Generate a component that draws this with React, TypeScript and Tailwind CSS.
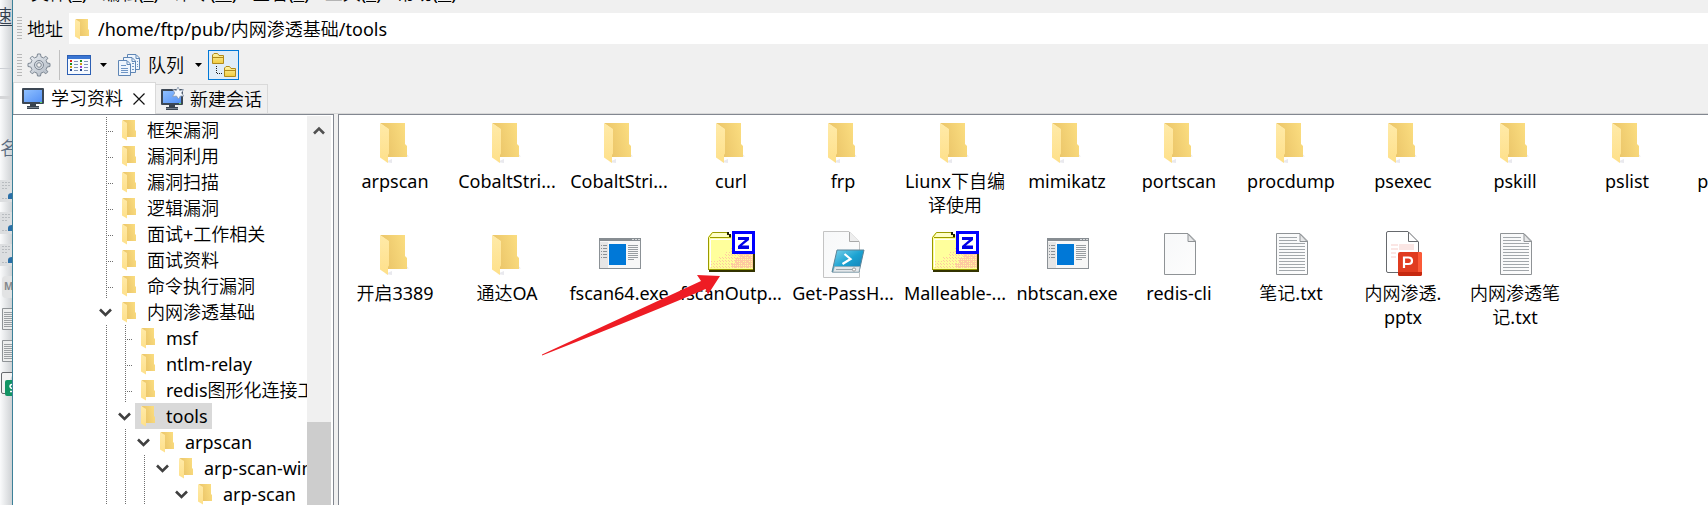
import React, { useState } from "react";

type Kind = "folder" | "exe" | "zip" | "ps" | "blank" | "txt" | "ppt";
type Entry = { kind: Kind; lines: string[] };

const rowOne: Entry[] = [
  { kind: "folder", lines: ["arpscan"] },
  { kind: "folder", lines: ["CobaltStri..."] },
  { kind: "folder", lines: ["CobaltStri..."] },
  { kind: "folder", lines: ["curl"] },
  { kind: "folder", lines: ["frp"] },
  { kind: "folder", lines: ["Liunx下自编", "译使用"] },
  { kind: "folder", lines: ["mimikatz"] },
  { kind: "folder", lines: ["portscan"] },
  { kind: "folder", lines: ["procdump"] },
  { kind: "folder", lines: ["psexec"] },
  { kind: "folder", lines: ["pskill"] },
  { kind: "folder", lines: ["pslist"] },
  { kind: "folder", lines: ["pspasswd"] },
];

const rowTwo: Entry[] = [
  { kind: "folder", lines: ["开启3389"] },
  { kind: "folder", lines: ["通达OA"] },
  { kind: "exe", lines: ["fscan64.exe"] },
  { kind: "zip", lines: ["fscanOutp..."] },
  { kind: "ps", lines: ["Get-PassH..."] },
  { kind: "zip", lines: ["Malleable-..."] },
  { kind: "exe", lines: ["nbtscan.exe"] },
  { kind: "blank", lines: ["redis-cli"] },
  { kind: "txt", lines: ["笔记.txt"] },
  { kind: "ppt", lines: ["内网渗透.", "pptx"] },
  { kind: "txt", lines: ["内网渗透笔", "记.txt"] },
];

type Guide = "none" | "line" | "branch" | "open";
type Node = { name: string; guides: Guide[]; selected?: boolean };

const tree: Node[] = [
  { name: "框架漏洞", guides: ["branch"] },
  { name: "漏洞利用", guides: ["branch"] },
  { name: "漏洞扫描", guides: ["branch"] },
  { name: "逻辑漏洞", guides: ["branch"] },
  { name: "面试+工作相关", guides: ["branch"] },
  { name: "面试资料", guides: ["branch"] },
  { name: "命令执行漏洞", guides: ["branch"] },
  { name: "内网渗透基础", guides: ["open"] },
  { name: "msf", guides: ["line", "branch"] },
  { name: "ntlm-relay", guides: ["line", "branch"] },
  { name: "redis图形化连接工具", guides: ["line", "branch"] },
  { name: "tools", guides: ["line", "open"], selected: true },
  { name: "arpscan", guides: ["line", "line", "open"] },
  { name: "arp-scan-windows", guides: ["line", "line", "line", "open"] },
  { name: "arp-scan", guides: ["line", "line", "line", "none", "open"] },
];

function Gradients() {
  return (
    <svg className="absolute size-0" aria-hidden="true">
      <defs>
        <linearGradient id="folderBack" x1="0" y1="0.3" x2="1" y2="0">
          <stop offset="0" stopColor="#eac468" />
          <stop offset="1" stopColor="#fcdf82" />
        </linearGradient>
        <linearGradient id="folderFront" x1="0" y1="0" x2="0" y2="1">
          <stop offset="0" stopColor="#ffeaa8" />
          <stop offset="1" stopColor="#fee08a" />
        </linearGradient>
        <linearGradient id="paper" x1="0" y1="0" x2="1" y2="1">
          <stop offset="0" stopColor="#f7f8f9" />
          <stop offset="1" stopColor="#fdfdfd" />
        </linearGradient>
        <linearGradient id="screen" x1="0" y1="0" x2="1" y2="1">
          <stop offset="0" stopColor="#8fc0ff" />
          <stop offset="1" stopColor="#5591f5" />
        </linearGradient>
        <linearGradient id="shell" x1="0" y1="0" x2="1" y2="1">
          <stop offset="0" stopColor="#7fd3ec" />
          <stop offset="0.5" stopColor="#1ba2d1" />
          <stop offset="1" stopColor="#1679b0" />
        </linearGradient>
        <linearGradient id="gear" x1="0" y1="0" x2="1" y2="1">
          <stop offset="0" stopColor="#eef1f5" />
          <stop offset="1" stopColor="#aeb7c2" />
        </linearGradient>
        <linearGradient id="tinyFolder" x1="0" y1="0" x2="0" y2="1">
          <stop offset="0" stopColor="#fff6a8" />
          <stop offset="1" stopColor="#f0cb3e" />
        </linearGradient>
        <pattern id="dither" width="3" height="3" patternUnits="userSpaceOnUse">
          <rect width="1" height="1" fill="#ffc9a0" />
          <rect x="1" y="1" width="1" height="1" fill="#ffc9a0" />
        </pattern>
        <pattern id="ditherDense" width="2" height="2" patternUnits="userSpaceOnUse">
          <rect width="2" height="1" fill="#ffc9a0" />
          <rect x="1" y="1" width="1" height="1" fill="#ffc9a0" />
        </pattern>
      </defs>
    </svg>
  );
}

function SmallFolder() {
  return (
    <svg width="15" height="22" viewBox="0 0 15 22" className="shrink-0" aria-hidden="true">
      <path d="M1 1H13V11L14 12V18H4Z" fill="url(#folderBack)" />
      <path d="M0 1L5 4V21.500L0 18.500Z" fill="url(#folderFront)" />
    </svg>
  );
}

function FolderIcon() {
  return (
    <>
      <path d="M30 37.500h8l-2-2h-6zM14 43l7 1 0-4z" fill="#e9e9ee" />
      <path d="M9 4H34V25L36 27V38H17V10Z" fill="url(#folderBack)" />
      <path d="M9 4L18 10V34.500L17 36V44L9 38.500Z" fill="url(#folderFront)" />
    </>
  );
}

function ExeIcon() {
  return (
    <>
      <rect x="4.500" y="7.500" width="41" height="30" fill="#f7f7f7" stroke="#8b9196" />
      <rect x="4" y="7" width="42" height="3" fill="#878d92" />
      <path d="M37 8h2v1h-2zM40 8h2v1h-2zM43 8h2v1h-2z" fill="#d5d8da" />
      <rect x="5" y="11" width="8" height="26" fill="#e6e6e6" />
      <rect x="14" y="13" width="17" height="21" fill="#0078d7" />
      <path d="M6 14.500h1m1 0h4M6 17.500h1m1 0h4M6 20.500h1m1 0h4M6 23.500h1m1 0h4M6 26.500h1m1 0h4" stroke="#8b9196" />
      <path d="M33 14.500h10M33 16.500h10M33 18.500h10M33 20.500h10M33 22.500h10M33 24.500h10M33 26.500h10M33 28.500h6" stroke="#989da1" />
    </>
  );
}

function ZipIcon() {
  return (
    <g transform="translate(0 -1)">
      <path d="M1 7L5 2H19L23 5H46V39H1Z" fill="#ffff9c" />
      <path d="M4 7L6 2H18L21 7Z" fill="#ffffc8" />
      <path d="M18 22h6v-4h8v-4h14v24H4v-7h8v-5h6z" fill="url(#dither)" />
      <path d="M28 28h4v-5h14v15H24v-5h4z" fill="url(#ditherDense)" />
      <path d="M1.500 39V7.500L5.500 2.500H20M3 7.500H24" stroke="#9a9a00" fill="none" />
      <path d="M3.500 37V9.500H24" stroke="#ffffff" fill="none" />
      <path d="M20 2h2v2h2v3h-2V5h-2z" fill="#202000" />
      <path d="M2 39H46V22H48V42H2Z" fill="#333300" />
      <rect x="1" y="39" width="45" height="1" fill="#9a9a00" />
      <rect x="26.500" y="2.500" width="20" height="20" fill="#fff" stroke="#0000ff" strokeWidth="3" />
      <path d="M31 7H42V10L35 15.500H42V19H31V16L38 10H31Z" fill="#0000e8" />
    </g>
  );
}

function PowerShellIcon() {
  return (
    <>
      <path d="M4.500 .500H30L40.500 11V46.500H4.500Z" fill="url(#paper)" stroke="#c4c4c4" />
      <path d="M30.500 1V10.500H40" fill="#eee" stroke="#a9a9a9" />
      <path d="M18 19H45L40 41H13Z" fill="url(#shell)" stroke="#5d8498" />
      <path d="M15.500 35.500H41L40 41H14Z" fill="#e3e7ea" stroke="#8fa2ad" strokeWidth=".6" />
      <path d="M25.500 23l6 5-8 5" stroke="#fff" strokeWidth="2.200" fill="none" />
      <path d="M17 38.500h18" stroke="#9ba5ab" />
      <circle cx="35" cy="38.500" r="1.600" fill="#fff" stroke="#888" strokeWidth=".8" />
    </>
  );
}

function PageIcon({ lined }: { lined: boolean }) {
  return (
    <>
      <path d="M9.500 2.500H33L40.500 10V43.500H9.500Z" fill="url(#paper)" stroke="#8f9396" />
      <path d="M33 3V10.500H40Z" fill="#e6e7e8" stroke="#8f9396" />
      {lined && (
        <path
          d="M12 6.500h18M12 9.500h18M12 12.500h26M12 15.500h26M12 18.500h26M12 21.500h26M12 24.500h26M12 27.500h26M12 30.500h26M12 33.500h26M12 36.500h26M12 39.500h26"
          stroke="#a2a7ab"
        />
      )}
    </>
  );
}

function SlidesIcon() {
  return (
    <g transform="translate(1 0)">
      <path d="M8 .500H28L38.500 11V41.500H8Q6.500 41.500 6.500 40V2Q6.500 .500 8 .500Z" fill="#fff" stroke="#66696d" />
      <path d="M28.500 1V10.500H38" fill="none" stroke="#66696d" />
      <path d="M11 13h7v2h-7zM11 17h7v2h-7zM11 21h5v2h-5zM11 25h5v2h-5zM19 13h15v6h-15z" fill="#fbe6e4" />
      <rect x="18" y="21" width="24" height="24" rx="2" fill="#e03c20" />
      <path d="M38 21h2q2 0 2 2v18h-4z" fill="#fb5a38" />
      <path d="M18 41h24v2q0 2-2 2h-20q-2 0-2-2z" fill="#c6280f" />
      <path d="M24 37V26.500H28.500Q32 26.500 32 29.700Q32 33 28.500 33H24" fill="none" stroke="#fff" strokeWidth="2.200" />
    </g>
  );
}

function FileIcon({ kind }: { kind: Kind }) {
  return (
    <svg width="48" height="48" viewBox="0 0 48 48" aria-hidden="true">
      {kind === "folder" && <FolderIcon />}
      {kind === "exe" && <ExeIcon />}
      {kind === "zip" && <ZipIcon />}
      {kind === "ps" && <PowerShellIcon />}
      {kind === "blank" && <PageIcon lined={false} />}
      {kind === "txt" && <PageIcon lined />}
      {kind === "ppt" && <SlidesIcon />}
    </svg>
  );
}

function FileTile({ entry }: { entry: Entry }) {
  return (
    <button type="button" className="flex h-28 flex-col items-center whitespace-nowrap">
      <FileIcon kind={entry.kind} />
      <span className="mt-0.5 flex flex-col leading-6">
        {entry.lines.map((line) => (
          <span key={line}>{line}</span>
        ))}
      </span>
    </button>
  );
}

function Monitor({ star = false }: { star?: boolean }) {
  return (
    <svg width="24" height="24" viewBox="0 0 24 24" className="shrink-0" aria-hidden="true">
      <rect x="1" y="2" width="22" height="16" rx="1" fill="#3c4754" />
      <rect x="3" y="4" width="18" height="12" fill="url(#screen)" />
      <path d="M9 18h6v2h3v3H6v-3h3z" fill="#39434f" />
      <path d="M6 21.500h12" stroke="#77818c" />
      <rect x="19" y="16" width="2" height="1" fill="#5fd65f" />
      {star && (
        <path
          d="M18 0l1.700 3.500L23.500 2.500L21.500 6L24 9L20.300 9L18.500 12L16.500 9L12.500 9.500L14.800 6L12.800 2.500L16.300 3.500Z"
          fill="#f5f8fc"
          stroke="#8c9bb0"
          strokeWidth=".8"
        />
      )}
    </svg>
  );
}

function Gear() {
  return (
    <svg width="24" height="24" viewBox="-12 -12 24 24" aria-hidden="true">
      <g fill="url(#gear)" stroke="#7d8793" strokeWidth="1">
        <path d="M-2 -8.200L-1.500 -11H1.500L2 -8.200L4.600 -7.100L6.800 -8.800L8.800 -6.800L7.100 -4.600L8.200 -2L11 -1.500V1.500L8.200 2L7.100 4.600L8.800 6.800L6.800 8.800L4.600 7.100L2 8.200L1.500 11H-1.500L-2 8.200L-4.600 7.100L-6.800 8.800L-8.800 6.800L-7.100 4.600L-8.200 2L-11 1.500V-1.500L-8.200 -2L-7.100 -4.600L-8.800 -6.800L-6.800 -8.800L-4.600 -7.100Z" />
        <circle r="4.500" fill="#d6dbe1" />
        <circle r="2.300" fill="#f0f0f0" />
      </g>
    </svg>
  );
}

function ListViewIcon() {
  return (
    <svg width="24" height="20" viewBox="0 0 24 20" aria-hidden="true">
      <rect x=".5" y=".5" width="23" height="19" fill="#f6faff" stroke="#2c5fb3" />
      <rect x="1" y="1" width="22" height="3" fill="#3b76d3" />
      <path d="M3 5h2v2H3z" fill="#e02020" />
      <path d="M3 8h2v2H3z" fill="#1c8a1c" />
      <path d="M3 11h2v2H3z" fill="#d09a10" />
      <path d="M3 14h2v2H3z" fill="#20408a" />
      <path d="M13 5h2v2h-2z" fill="#1c8a1c" />
      <path d="M13 8h2v2h-2z" fill="#d09a10" />
      <path d="M13 11h2v2h-2z" fill="#9a40d0" />
      <path d="M13 14h2v2h-2z" fill="#20408a" />
      <path d="M7 6.500h4M7 9.500h4M7 12.500h4M7 15.500h4M17 6.500h4M17 9.500h4M17 12.500h4M17 15.500h4" stroke="#7f93b5" />
    </svg>
  );
}

function PagesIcon() {
  return (
    <svg width="22" height="22" viewBox="0 0 22 22" aria-hidden="true">
      <g fill="#eef5fd" stroke="#5f86b5">
        <path d="M9.500 .500H18L21.500 4V15.500H9.500Z" />
        <path d="M5.500 3.500H14L17.500 7V18.500H5.500Z" />
        <path d="M.5 6.500H9L12.500 10V21.500H.5Z" />
      </g>
      <path d="M18 1v3.500h3M14 4v3.500h3M9 7v3.500h3" fill="none" stroke="#5f86b5" />
      <path d="M3 11.500h5M3 14.500h7M3 16.500h7M3 18.500h7M14 9.500h2M14 12.500h2M14 15.500h2M19 7.500h1M19 10.500h1M19 12.500h1" stroke="#6f95c4" />
    </svg>
  );
}

function FolderTreeIcon() {
  return (
    <svg width="26" height="26" viewBox="0 0 26 26" aria-hidden="true">
      <g fill="url(#tinyFolder)" stroke="#b08a1a">
        <path d="M1.500 11.500V3L3 1.500H6.500L8 3.500H12.500V11.500Z" />
        <path d="M13.500 24.500V16L15 14.500H18.500L20 16.500H24.500V24.500Z" />
      </g>
      <path d="M2 5.500h10M14 18.500h10" stroke="#b08a1a" />
      <path d="M5.500 14V21.500H12" fill="none" stroke="#222" strokeDasharray="1 1" />
    </svg>
  );
}

function Caret() {
  return (
    <svg width="7" height="4" viewBox="0 0 7 4" className="shrink-0" aria-hidden="true">
      <path d="M0 0H7L3.500 4Z" fill="#000" />
    </svg>
  );
}

function Grip() {
  return (
    <span className="h-[23px] w-[5px] shrink-0 bg-[repeating-linear-gradient(to_bottom,#b8b8b8_0_1px,transparent_1px_3px)]" />
  );
}

function GuideCell({ type }: { type: Guide }) {
  return (
    <svg width="19" height="26" viewBox="0 0 19 26" className="shrink-0" aria-hidden="true">
      {(type === "line" || type === "branch") && (
        <path d="M9.500 0V26" stroke="#6f6f6f" strokeDasharray="1 1" />
      )}
      {type === "branch" && <path d="M11 14.500H17" stroke="#6f6f6f" strokeDasharray="1 1" />}
      {type === "open" && <path d="M3 10.500L8.500 16L14 10.500" fill="none" stroke="#404040" strokeWidth="2.600" />}
    </svg>
  );
}

function TreeRow({ node }: { node: Node }) {
  return (
    <li className="flex h-[26px] items-center whitespace-nowrap">
      {node.guides.map((g, i) => (
        <GuideCell key={i} type={g} />
      ))}
      <button
        type="button"
        className={
          node.selected
            ? "flex h-[26px] items-center gap-2.5 bg-[#d9d9d9] pr-1 pl-1.5"
            : "flex h-[26px] items-center gap-2.5 pr-1 pl-1.5"
        }
      >
        <SmallFolder />
        <span className="leading-[26px]">{node.name}</span>
      </button>
    </li>
  );
}

function Photo() {
  return (
    <svg width="12" height="22" viewBox="0 0 12 22" className="mb-2.5" aria-hidden="true">
      <rect x="-6" y="0" width="18" height="22" fill="#dcdee0" />
      <path d="M2 2.500h9M2 5.500h9M2 8.500h6M2 18.500h9" stroke="#b8bcc0" strokeDasharray="2 1" />
      <path d="M8 19v-3q0-3 4-3v6z" fill="#2a6fa8" />
    </svg>
  );
}

function Note() {
  return (
    <svg width="12" height="22" viewBox="0 0 12 22" className="mb-2.5" aria-hidden="true">
      <path d="M13 .500H2.500V21.500H13" fill="#eceded" stroke="#8f9396" />
      <path d="M4 4.500h8M4 6.500h8M4 8.500h8M4 10.500h8M4 12.500h8M4 14.500h8M4 16.500h8M4 18.500h8" stroke="#9a9ea1" />
    </svg>
  );
}

function BackgroundWindow() {
  return (
    <aside className="flex w-[13px] shrink-0 flex-col overflow-hidden border-r border-[#3c8199] bg-linear-to-r from-[#fafbfc] to-[#cfd2d5] text-[#33404f]">
      <div className="flex h-[69px] flex-col border-b border-[#cdd0d5] pt-1">
        <span className="flex h-[22px] w-3 justify-end overflow-hidden border-b border-[#33404f] leading-6">速</span>
      </div>
      <div className="h-[27px]" />
      <div className="h-[3px] w-2.5 bg-[#d5d6d8]" />
      <div className="flex h-[81px] items-center pt-4 text-[#5a6b80]">名</div>
      <Photo />
      <Photo />
      <Photo />
      <div className="mb-2.5 ml-0.5 flex h-[22px] items-center rounded-l bg-[#e2e3e4] pl-0.5 text-[10px] font-bold text-[#85888c]">
        M
      </div>
      <Note />
      <Note />
      <svg width="12" height="24" viewBox="0 0 12 24" aria-hidden="true">
        <path d="M13 .500H3Q1.500 .500 1.500 2V20Q1.500 21.500 3 21.500H5" fill="#f3f3f3" stroke="#66696d" />
        <path d="M5 10q0-2 2-2h6v16H7q-2 0-2-2z" fill="#129464" />
        <path d="M12.500 12.500H12Q10 12.500 10 14.500Q10 16 12.500 16.500M10 19.500H12.500" stroke="#fff" strokeWidth="1.500" fill="none" />
      </svg>
    </aside>
  );
}

function MenuItem({ label, hot }: { label: string; hot: string }) {
  return (
    <button type="button" className="whitespace-nowrap leading-6">
      {label}(<u>{hot}</u>)
    </button>
  );
}

export default function App() {
  const [path, setPath] = useState("/home/ftp/pub/内网渗透基础/tools");
  return (
    <div className="relative flex h-screen overflow-hidden bg-[#f0f0f0] font-['Noto_Sans','Noto_Sans_CJK_SC_DemiLight','Noto_Sans_CJK_SC',sans-serif] text-lg text-black">
      <Gradients />
      <BackgroundWindow />
      <div className="flex min-w-0 flex-1 flex-col">
        <nav className="flex h-[13px] shrink-0 items-end gap-[15px] overflow-hidden pb-2 pl-[18px]">
          <MenuItem label="文件" hot="F" />
          <MenuItem label="编辑" hot="E" />
          <MenuItem label="命令" hot="M" />
          <MenuItem label="查看" hot="V" />
          <MenuItem label="工具" hot="T" />
          <MenuItem label="帮助" hot="H" />
        </nav>

        <div className="flex h-[31px] shrink-0 items-center pl-1">
          <Grip />
          <label htmlFor="path" className="mr-1.5 ml-[5px] whitespace-nowrap leading-6">
            地址
          </label>
          <div className="flex h-[31px] min-w-0 flex-1 items-center gap-2 bg-white pl-1.5">
            <SmallFolder />
            <input
              id="path"
              value={path}
              onChange={(e) => setPath(e.target.value)}
              className="min-w-0 flex-1 bg-transparent outline-none"
            />
          </div>
        </div>

        <div className="flex h-[38px] shrink-0 items-center pt-1 pl-1">
          <Grip />
          <button type="button" aria-label="选项" className="ml-[5px]">
            <Gear />
          </button>
          <span className="mr-[7px] ml-2 h-[30px] w-px bg-[#c0c0c0]" />
          <button type="button" aria-label="查看" className="flex items-center gap-[9px]">
            <ListViewIcon />
            <Caret />
          </button>
          <button type="button" className="ml-[11px] flex items-center">
            <PagesIcon />
            <span className="mr-[11px] ml-2 whitespace-nowrap leading-6">队列</span>
            <Caret />
          </button>
          <button
            type="button"
            aria-label="文件夹树"
            className="ml-1.5 flex h-[30px] w-[31px] items-center justify-center border border-[#0078d7] bg-[#e0edf7]"
          >
            <FolderTreeIcon />
          </button>
        </div>

        <div className="flex h-8 shrink-0 items-end">
          <div className="flex h-8 w-[143px] items-center gap-1.5 border border-b-0 border-[#d9d9d9] bg-white pb-0.5 pl-[7px]">
            <Monitor />
            <button type="button" className="whitespace-nowrap leading-6">
              学习资料
            </button>
            <button type="button" aria-label="关闭" className="ml-1 pt-0.5">
              <svg width="12" height="12" viewBox="0 0 12 12" aria-hidden="true">
                <path d="M.5 .5L11.500 11.500M11.500 .5L.5 11.500" stroke="#111" strokeWidth="1.200" />
              </svg>
            </button>
          </div>
          <button
            type="button"
            className="flex h-[30px] w-28 items-center gap-1.5 border border-l-0 border-[#d9d9d9] pl-1 whitespace-nowrap"
          >
            <Monitor star />
            新建会话
          </button>
          <div className="flex-1 self-stretch border-b border-[#d9d9d9]" />
        </div>

        <div className="flex min-h-0 flex-1 gap-1">
          <section className="flex w-[321px] shrink-0 overflow-hidden border-t border-r border-[#828790] bg-white pr-0.5">
            <ul className="min-w-0 flex-1 overflow-hidden pt-0.5 pl-[84px]">
              {tree.map((node) => (
                <TreeRow key={node.name + node.guides.length} node={node} />
              ))}
            </ul>
            <div className="mt-px flex w-6 shrink-0 flex-col items-center bg-[#f0f0f0] pt-2.5">
              <svg width="12" height="9" viewBox="0 0 12 9" aria-hidden="true">
                <path d="M1 7.500L6 2.500L11 7.500" fill="none" stroke="#505050" strokeWidth="2.600" />
              </svg>
              <div className="mt-[287px] w-full flex-1 bg-[#cdcdcd]" />
            </div>
          </section>

          <main className="relative min-w-0 flex-1 overflow-hidden border-t border-l border-[#828790] bg-white">
            <div className="grid grid-cols-[repeat(13,112px)] pt-1">
              {rowOne.map((entry, i) => (
                <FileTile key={i} entry={entry} />
              ))}
              {rowTwo.map((entry, i) => (
                <FileTile key={i} entry={entry} />
              ))}
            </div>
            <svg
              width="182"
              height="84"
              viewBox="0 0 182 84"
              className="pointer-events-none absolute top-[158px] left-[201px]"
              aria-hidden="true"
            >
              <path d="M2 81.500L161 8L157 2L180 3L168 21.500L165.500 16Q120 36 2 82.500Z" fill="#ee1c24" />
            </svg>
          </main>
        </div>
      </div>
    </div>
  );
}
